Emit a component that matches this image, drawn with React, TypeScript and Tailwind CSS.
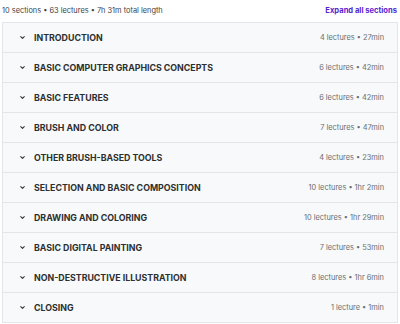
import React from "react";

const sections: [string, string][] = [
  ["INTRODUCTION", "4 lectures • 27min"],
  ["BASIC COMPUTER GRAPHICS CONCEPTS", "6 lectures • 42min"],
  ["BASIC FEATURES", "6 lectures • 42min"],
  ["BRUSH AND COLOR", "7 lectures • 47min"],
  ["OTHER BRUSH-BASED TOOLS", "4 lectures • 23min"],
  ["SELECTION AND BASIC COMPOSITION", "10 lectures • 1hr 2min"],
  ["DRAWING AND COLORING", "10 lectures • 1hr 29min"],
  ["BASIC DIGITAL PAINTING", "7 lectures • 53min"],
  ["NON-DESTRUCTIVE ILLUSTRATION", "8 lectures • 1hr 6min"],
  ["CLOSING", "1 lecture • 1min"],
];

function Chevron() {
  return (
    <svg width="7" height="7" viewBox="0 0 24 24" fill="none" stroke="#2d2f31" strokeWidth="3.5" strokeLinecap="round" strokeLinejoin="round">
      <path d="M6 9l6 6 6-6" />
    </svg>
  );
}

export default function App() {
  return (
    <div className="w-[400px] h-[324px] bg-white overflow-hidden" style={{ fontFamily: "Inter, 'Liberation Sans', sans-serif" }}>
      <div className="flex items-center justify-between h-[22px] pl-[2px] pr-[3px] pb-[1px]">
        <span className="text-[7.4px] text-[#3e4143]">10 sections • 63 lectures • 7h 31m total length</span>
        <span className="text-[7.6px] font-bold text-[#5624d0]">Expand all sections</span>
      </div>
      <div className="mx-[2px] w-[396px] border border-[#e2e6e9]">
        {sections.map(([t, m], i) => (
          <div key={i} className={`flex items-center bg-[#f7f9fa] pl-[16px] pr-[13px] ${i > 0 ? "border-t border-[#e2e6e9] h-[30px]" : "h-[29px]"}`}>
            <Chevron />
            <span className="ml-[8px] text-[8.8px] font-bold text-[#2d2f31]">{t}</span>
            <span className="ml-auto text-[7.4px] text-[#6a6f73]">{m}</span>
          </div>
        ))}
      </div>
    </div>
  );
}
